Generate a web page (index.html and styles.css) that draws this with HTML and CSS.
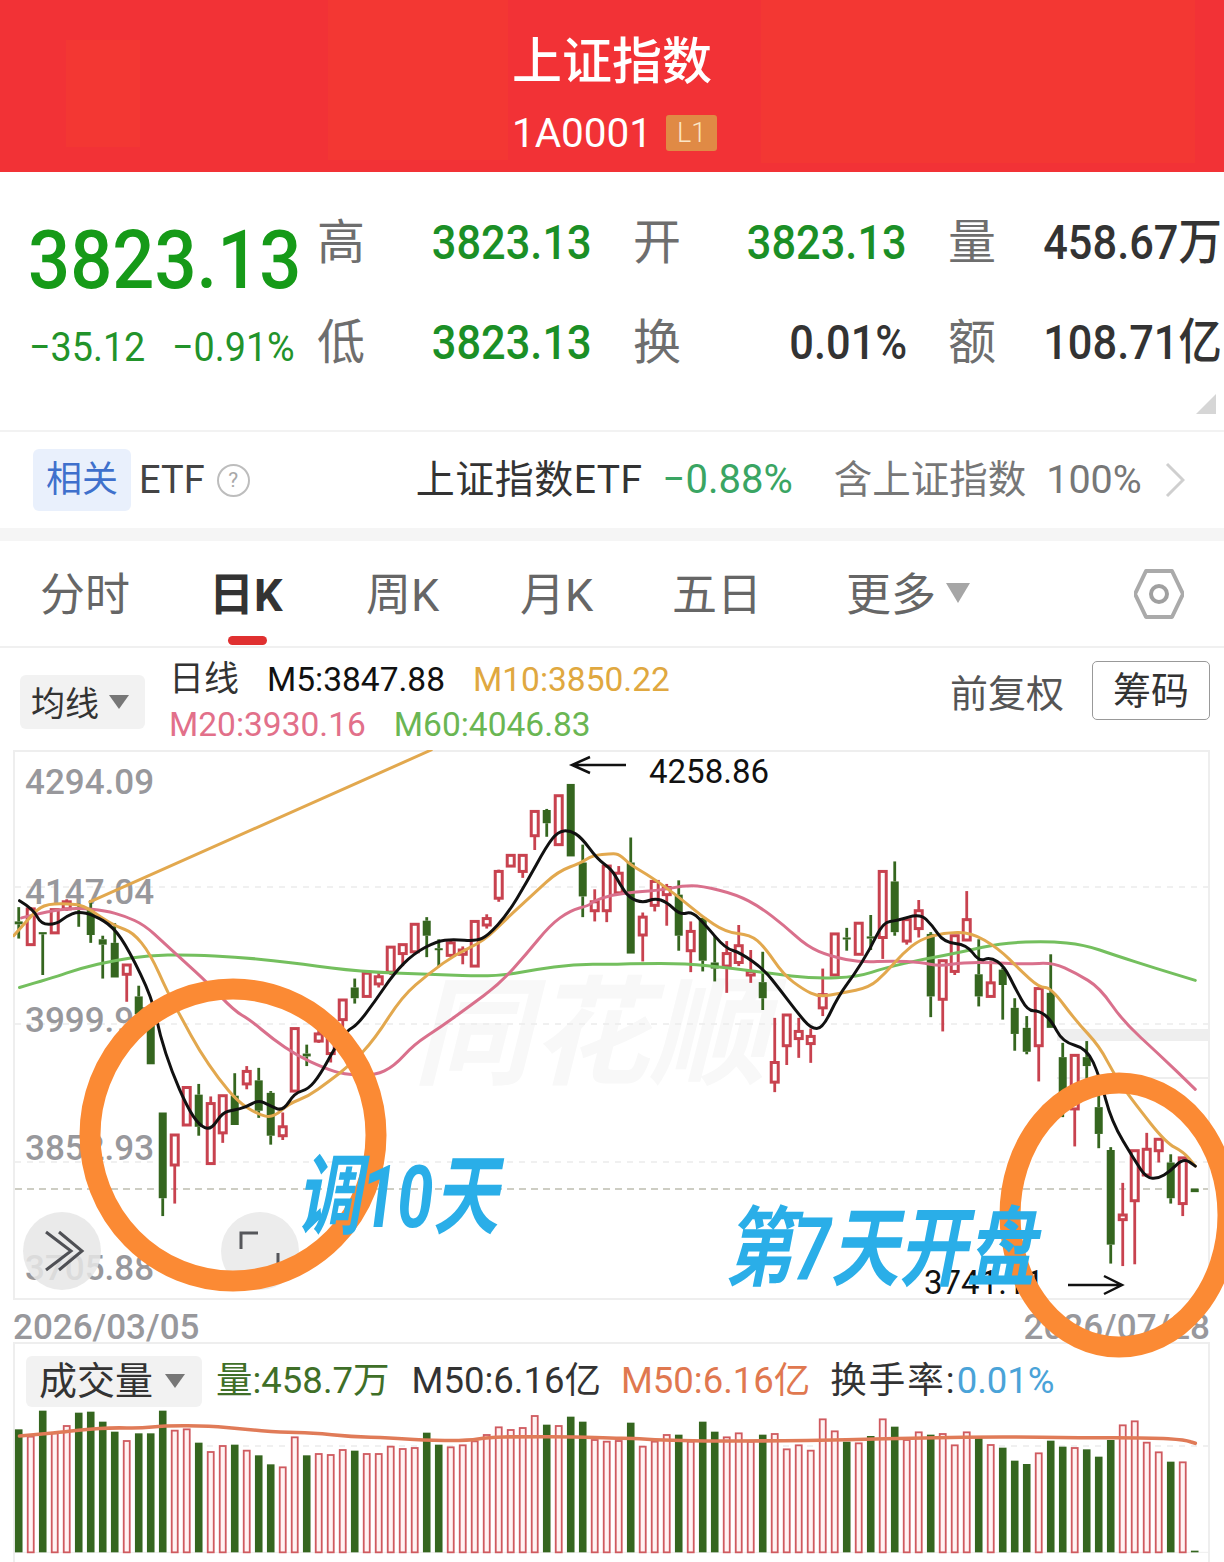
FILE: index.html
```html
<!DOCTYPE html>
<html lang="zh-CN">
<head>
    <meta charset="UTF-8">
    <meta name="viewport" content="width=device-width, initial-scale=1.0">
    <title>上证指数</title>
    <link rel="stylesheet" href="styles.css">
</head>
<body>
    <div class="page">
        <header class="title-bar">
            <div class="title">上证指数</div>
            <div class="code-line">
                <span class="code">1A0001</span>
                <span class="level">L1</span>
            </div>
        </header>

        <section class="quote">
            <div class="price-block">
                <div class="price">3823.13</div>
                <div class="change">
                    <span>−35.12</span>
                    <span>−0.91%</span>
                </div>
            </div>
            <div class="quote-grid">
                <div class="cell"><span class="cell-label">高</span><span class="val val-green">3823.13</span></div>
                <div class="cell"><span class="cell-label">开</span><span class="val val-green">3823.13</span></div>
                <div class="cell"><span class="cell-label">量</span><span class="val val-dark">458.67万</span></div>
                <div class="cell"><span class="cell-label">低</span><span class="val val-green">3823.13</span></div>
                <div class="cell"><span class="cell-label">换</span><span class="val val-dark">0.01%</span></div>
                <div class="cell"><span class="cell-label">额</span><span class="val val-dark">108.71亿</span></div>
            </div>
            <span class="corner"></span>
        </section>

        <section class="etf-row">
            <span class="etf-tag">相关</span>
            <span class="etf-name">ETF</span>
            <span class="help">?</span>
            <span class="etf-fund">上证指数ETF</span>
            <span class="etf-change">−0.88%</span>
            <span class="etf-hold">含上证指数</span>
            <span class="etf-pct">100%</span>
            <svg class="chevron" width="20" height="36" viewBox="0 0 20 36">
                <path d="M2 2 L18 18 L2 34" fill="none" stroke="#cfcfcf" stroke-width="3"/>
            </svg>
        </section>

        <div class="gap-bar"></div>

        <nav class="tabs">
            <span class="tab">分时</span>
            <span class="tab tab-active">日K</span>
            <span class="tab">周K</span>
            <span class="tab">月K</span>
            <span class="tab">五日</span>
            <span class="tab tab-more">更多<i class="caret caret-light"></i></span>
            <svg class="hex" width="50" height="50" viewBox="0 0 50 50">
                <path d="M12 2 H38 L49 25 L38 48 H12 L1 25 Z" fill="none" stroke="#aaaaaa" stroke-width="4" stroke-linejoin="round"/>
                <circle cx="25" cy="25" r="8" fill="none" stroke="#a0a0a0" stroke-width="4"/>
            </svg>
        </nav>

        <section class="legend">
            <div class="select ma-select">均线<i class="caret"></i></div>
            <div class="legend-lines">
                <div class="legend-line">
                    <span class="legend-name">日线</span>
                    <span class="m5">M5:3847.88</span>
                    <span class="m10">M10:3850.22</span>
                </div>
                <div class="legend-line">
                    <span class="m20">M20:3930.16</span>
                    <span class="m60">M60:4046.83</span>
                </div>
            </div>
            <span class="adjust">前复权</span>
            <span class="chips">筹码</span>
        </section>

        <section class="chart">
            <svg id="kline" class="chart-svg" width="1197" height="550"></svg>
        </section>

        <div class="dates">
            <span>2026/03/05</span>
            <span>2026/07/28</span>
        </div>

        <section class="volume">
            <div class="volume-head">
                <div class="select vol-select">成交量<i class="caret"></i></div>
                <span class="vol-now">量:458.7万</span>
                <span class="vol-ma">M50:6.16亿</span>
                <span class="vol-ma2">M50:6.16亿</span>
                <span class="vol-rate"><em>换手率:</em><b>0.01%</b></span>
            </div>
            <svg id="volbars" class="vol-svg" width="1197" height="150"></svg>
        </section>

        <!-- marks drawn on top of the screenshot -->
        <svg class="marks" width="1224" height="1562" viewBox="0 0 1224 1562">
            <path d="M626 765 H572 M590 757 L572 765 L590 773" fill="none" stroke="#111" stroke-width="2.5"/>
            <text class="mark-num" x="649" y="783">4258.86</text>
            <text class="mark-num" x="924" y="1294">3741.11</text>
            <path d="M1068 1285 H1122 M1104 1276 L1122 1285 L1104 1294" fill="none" stroke="#111" stroke-width="2.5"/>
            <ellipse cx="233" cy="1135" rx="143" ry="146" fill="none" stroke="#fb8a34" stroke-width="21"/>
            <ellipse cx="1119" cy="1215" rx="109" ry="132" fill="none" stroke="#fb8a34" stroke-width="21"/>
        </svg>
        <div class="note note-left">调10天</div>
        <div class="note note-right">第7天开盘</div>
    </div>

    <script src="chart.js"></script>
</body>
</html>
```

FILE: styles.css
```css
* {
    box-sizing: border-box;
}

body {
    margin: 0;
    background: #fff;
    font-family: Roboto, "Noto Sans CJK SC", sans-serif;
}

.page {
    position: relative;
    width: 1224px;
    height: 1562px;
    overflow: hidden;
}

/* title bar */
.title-bar {
    height: 172px;
    padding-top: 31px;
    color: #fff;
    text-align: center;
    background:
        linear-gradient(#f33733, #f33733) 66px 40px / 74px 107px no-repeat,
        linear-gradient(#f33733, #f33733) 328px 0 / 180px 160px no-repeat,
        linear-gradient(#f33733, #f33733) 761px 0 / 434px 163px no-repeat,
        #f23236;
}

.title {
    font-size: 50px;
    font-weight: 500;
    line-height: 62px;
}

.code-line {
    display: flex;
    justify-content: center;
    align-items: center;
    gap: 14px;
    margin-top: 16px;
    padding-left: 5px;
}

.code {
    font-size: 40.5px;
    line-height: 48px;
}

.level {
    width: 51px;
    height: 36px;
    background: #e08a45;
    border-radius: 3px;
    color: #fbe6c6;
    font-size: 27px;
    font-weight: 300;
    line-height: 36px;
}

/* quote block */
.quote {
    position: relative;
    display: flex;
    height: 260px;
    padding: 21px 0 0 28px;
    border-bottom: 2px solid #f2f2f2;
}

.price-block {
    width: 290px;
}

.price {
    margin-top: 22px;
    color: #169a18;
    font-size: 81.5px;
    font-weight: 500;
    line-height: 90px;
    white-space: nowrap;
    transform-origin: left center;
    transform: scaleX(0.91);
}

.change {
    display: flex;
    gap: 17px;
    margin-top: 19px;
    padding-left: 1px;
    color: #22932a;
    font-size: 41px;
    line-height: 46px;
}

.change span {
    transform-origin: left center;
    transform: scaleX(0.92);
}

.quote-grid {
    display: grid;
    grid-template-columns: 274px 273px 273px;
    grid-auto-rows: 100px;
    column-gap: 42px;
}

.cell {
    display: flex;
    justify-content: space-between;
    align-items: center;
    line-height: 60px;
}

.cell-label {
    margin-left: -1px;
    color: #6e6e6e;
    font-size: 48px;
}

.val {
    font-size: 49px;
    font-weight: 500;
    white-space: nowrap;
    transform-origin: right center;
    transform: scaleX(0.885);
}

.val-green {
    color: #1b8f26;
}

.val-dark {
    color: #333;
}

.corner {
    position: absolute;
    right: 8px;
    bottom: 16px;
    border-style: solid;
    border-width: 0 0 20px 20px;
    border-color: transparent transparent #d6d6d6 transparent;
}

/* related etf */
.etf-row {
    display: flex;
    align-items: center;
    height: 96px;
    padding-left: 33px;
    font-size: 38px;
    line-height: 50px;
}

.etf-tag {
    width: 98px;
    height: 62px;
    background: #e9f0fc;
    border-radius: 6px;
    color: #3f70cc;
    font-size: 36px;
    line-height: 62px;
    text-align: center;
}

.etf-name {
    margin-left: 8px;
    color: #444;
}

.help {
    width: 33px;
    height: 33px;
    margin-left: 12px;
    border: 2px solid #bdbdbd;
    border-radius: 50%;
    color: #a8a8a8;
    font-size: 21px;
    line-height: 29px;
    text-align: center;
}

.etf-fund {
    margin-left: 166px;
    color: #333;
    font-size: 39px;
    letter-spacing: 0.5px;
}

.etf-change {
    margin-left: 20px;
    color: #3aa563;
    font-size: 40px;
}

.etf-hold {
    margin-left: 41px;
    color: #777;
    font-size: 38.5px;
}

.etf-pct {
    margin-left: 20px;
    color: #777;
    font-size: 39.5px;
}

.chevron {
    margin-left: 23px;
}

.gap-bar {
    height: 13px;
    background: #f5f5f5;
}

/* tabs */
.tabs {
    display: grid;
    grid-template-columns: 173px 153px 154px 152px 174px 288px 50px;
    align-items: center;
    height: 107px;
    padding: 4px 0 0 40px;
    border-bottom: 2px solid #f0f0f0;
    color: #666;
    font-size: 45px;
    line-height: 60px;
}

.tabs .hex {
    margin-top: -4px;
}

.tab {
    white-space: nowrap;
}

.tab-active {
    position: relative;
    margin-left: -4px;
    color: #333;
    font-weight: 700;
}

.tab-active::after {
    content: "";
    position: absolute;
    left: 19px;
    bottom: -19px;
    width: 39px;
    height: 9px;
    background: #e03030;
    border-radius: 5px;
}

.tab-more {
    display: flex;
    align-items: center;
}

.caret {
    display: inline-block;
    width: 0;
    height: 0;
    margin-left: 10px;
    border-style: solid;
    border-width: 14px 10px 0 10px;
    border-color: #777 transparent transparent transparent;
}

.caret-light {
    margin-top: -6px;
    border-width: 20px 12px 0 12px;
    border-top-color: #a6a6a6;
}

/* legend above the candles */
.legend {
    display: flex;
    height: 102px;
    padding-left: 20px;
}

.select {
    display: flex;
    align-items: center;
    background: #f2f2f2;
    border-radius: 6px;
    color: #333;
    font-size: 34px;
    line-height: 48px;
}

.ma-select {
    width: 125px;
    height: 54px;
    margin-top: 27px;
    padding: 3px 0 0 11px;
}

.ma-select .caret {
    margin-top: -3px;
}

.legend-lines {
    width: 702px;
    margin-left: 24px;
    padding-top: 9px;
}

.legend-line {
    display: flex;
    gap: 28px;
    font-size: 33.5px;
    line-height: 45px;
}

.legend-name {
    color: #333;
    font-size: 35px;
}

.m5 {
    color: #111;
}

.m10 {
    color: #e0a840;
}

.m20 {
    color: #e2708a;
}

.m60 {
    color: #6ab653;
}

.adjust {
    margin: 22px 0 0 79px;
    color: #555;
    font-size: 38px;
    line-height: 48px;
    white-space: nowrap;
}

.chips {
    width: 118px;
    height: 59px;
    margin: 13px 0 0 28px;
    border: 1px solid #999;
    border-radius: 5px;
    color: #333;
    font-size: 38px;
    line-height: 59px;
    text-align: center;
}

/* chart area */
.chart {
    position: relative;
    width: 1197px;
    height: 550px;
    margin-left: 13px;
    box-shadow: inset 0 0 0 2px #eeeeee;
}

.chart-svg {
    position: absolute;
    top: 0;
    left: 0;
}

.axis-label {
    fill: #98989c;
    font-size: 35px;
    font-weight: 500;
}

.watermark {
    fill: #f8f8f8;
    font-size: 118px;
    font-weight: 700;
    font-style: italic;
}

.dates {
    display: flex;
    justify-content: space-between;
    width: 1197px;
    height: 42px;
    margin-left: 13px;
    color: #98989c;
    font-size: 35px;
    font-weight: 500;
    line-height: 56px;
}

/* volume */
.volume {
    width: 1197px;
    height: 220px;
    margin-left: 13px;
    box-shadow: inset 0 2px 0 #eeeeee, inset 2px 0 0 #eeeeee, inset -2px 0 0 #eeeeee;
}

.volume-head {
    display: flex;
    align-items: center;
    height: 66px;
    padding: 12px 0 0 13px;
    font-size: 36.5px;
    line-height: 48px;
    white-space: nowrap;
}

.vol-select {
    width: 176px;
    height: 51px;
    padding-left: 13px;
    font-size: 38px;
}

.vol-select .caret {
    margin-left: 12px;
}

.vol-now {
    margin-left: 14px;
    color: #3f6f28;
}

.vol-ma {
    margin-left: 22px;
    color: #333;
}

.vol-ma2 {
    margin-left: 20px;
    color: #e0784f;
}

.vol-rate {
    margin-left: 20px;
    color: #333;
}

.vol-rate em {
    font-style: normal;
    letter-spacing: 2px;
}

.vol-rate b {
    color: #4aa3d8;
    font-weight: 400;
}

.vol-svg {
    display: block;
}

/* hand drawn marks */
.marks {
    position: absolute;
    top: 0;
    left: 0;
}

.mark-num {
    fill: #111;
    font-size: 33px;
}

.note {
    position: absolute;
    color: #2aaee8;
    font-size: 68px;
    font-weight: 700;
    font-style: italic;
    line-height: 84px;
    white-space: nowrap;
    transform-origin: left top;
    transform: scaleY(1.28);
}

.note-left {
    left: 296px;
    top: 1141px;
    font-size: 65px;
    transform: scaleY(1.35);
}

.note-right {
    left: 725px;
    top: 1196px;
}
```

FILE: chart.js
```js
// all chart data is in "plot units": x = 48 + 30.75 * i, y read off a 2.8x scale
const SX = 2.5625, SY = 2.8;
const OX = 13, OY = 750;
const NS = 'http://www.w3.org/2000/svg';

const px = v => v / SX - OX;
const py = v => v / SY;

function add(svg, name, attrs, text) {
    const el = document.createElementNS(NS, name);
    for (const k in attrs) el.setAttribute(k, attrs[k]);
    if (text) el.textContent = text;
    svg.appendChild(el);
    return el;
}

// color, high, body top, body bottom, low
const candles = [
    ['g',440,480,488,528],['r',440,445,545,545],['g',510,510,516,630],['r',447,447,512,512],
    ['r',418,425,445,450],['g',430,440,445,495],['g',420,445,518,540],['g',520,530,545,640],
    ['g',485,540,637,637],['r',600,602,628,705],['g',660,690,740,760],['g',760,770,880,880],
    ['g',1015,1015,1255,1305],['r',1078,1078,1162,1270],['r',945,945,1050,1050],['g',935,965,1055,1080],
    ['r',970,990,1158,1158],['r',968,968,1072,1100],['g',905,968,1050,1050],['r',885,900,935,950],
    ['g',890,925,1010,1030],['g',955,960,1080,1105],['r',1015,1055,1080,1092],['r',780,780,955,955],
    ['g',825,850,858,885],['r',780,795,815,820],['r',790,800,850,875],['r',700,700,755,780],
    ['g',640,665,695,710],['r',625,625,690,690],['r',620,635,655,665],['r',552,552,622,630],
    ['r',545,545,570,605],['r',488,488,565,565],['g',468,478,520,580],['g',530,555,560,608],
    ['r',530,540,575,578],['r',550,560,572,600],['r',480,480,605,605],['r',460,472,490,500],
    ['r',335,340,415,425],['r',295,295,325,325],['r',295,295,340,358],['r',172,172,240,280],
    ['g',165,168,205,243],['r',128,128,265,265],['g',95,95,298,298],['g',265,315,410,468],
    ['r',390,425,450,480],['r',325,325,450,482],
    ['r',325,345,400,405],['g',245,315,570,570],['r',455,468,518,592],['r',368,368,435,452],
    ['r',375,385,405,492],['g',365,405,520,562],['r',480,508,562,622],['g',470,470,590,620],
    ['g',520,595,612,648],['r',535,570,605,680],['r',490,548,595,605],['r',560,620,630,652],
    ['g',565,650,695,728],['r',750,875,930,958],['r',742,742,828,882],['r',750,788,808,862],
    ['r',780,802,822,876],['r',612,685,722,745],['r',515,515,630,630],['g',498,525,530,562],
    ['r',485,485,572,572],['g',462,522,528,560],['r',340,340,525,585],['g',312,368,510,520],
    ['r',475,475,535,545],['r',420,450,500,525],['g',510,515,690,748],['r',590,590,698,788],
    ['r',520,520,620,630],['r',395,475,532,535],['g',530,628,690,718],['r',590,652,690,692],
    ['g',610,615,658,755],['g',695,722,795,842],['g',745,778,845,852],['r',668,668,828,928],
    ['g',572,680,778,778],['g',820,860,1000,1028],['r',855,855,1005,1110],['g',815,860,885,920],
    ['g',960,1000,1075,1115],['g',1112,1120,1385,1438],['r',1212,1302,1315,1445],['r',1122,1122,1262,1440],
    ['r',1072,1118,1190,1190],['r',1090,1090,1122,1155],['g',1132,1155,1255,1270],['r',1142,1142,1270,1305],
    ['g',1228,1228,1238,1238]
];

// volume bar tops, read off a 3x scale
const volumes = [
    ['g',268],['r',290],['g',212],['r',280],['r',258],['g',218],['g',215],['g',245],['g',275],['r',303],
    ['g',280],['g',280],['g',212],['r',272],['r',268],['g',308],['r',336],['r',318],['g',314],['r',332],
    ['g',346],['g',373],['r',382],['r',292],['g',346],['r',342],['r',345],['r',330],['g',332],['r',342],
    ['r',342],['r',320],['r',327],['r',324],['g',278],['g',314],['r',322],['r',316],['r',304],['r',285],
    ['r',262],['r',270],['r',264],['r',228],['g',254],['r',258],['g',230],['g',245],['r',300],['r',305],
    ['r',303],['g',248],['r',320],['r',305],['r',285],['g',284],['r',305],['g',245],['g',275],['r',292],
    ['r',280],['r',305],['g',284],['r',282],['r',328],['r',316],['r',332],['r',238],['r',274],['g',305],
    ['r',310],['g',288],['r',238],['g',260],['r',300],['r',277],['g',284],['r',282],['r',316],['r',277],
    ['g',290],['r',315],['g',323],['g',362],['g',372],['r',340],['g',302],['g',320],['r',324],['g',328],
    ['g',350],['g',300],['r',256],['r',244],['r',308],['r',337],['g',365],['r',367],['g',632]
];

// right half points were measured from the middle of the chart, so shift them
const R = 1568;
const shift = pts => pts.map(p => [p[0] + R, p[1]]);

const m5 = [[50,422],[85,445],[105,488],[145,488],[170,465],[200,452],[240,462],[290,495],[330,560],[390,695],[410,800],[440,900],[480,1000],[510,1050],[540,1065],[570,1015],[600,1008],[630,1000],[662,980],[690,995],[725,1012],[755,960],[790,950],[820,910],[860,830],[890,785],[915,770],[960,705],[1010,625],[1060,570],[1120,535],[1160,530],[1220,535],[1250,520],[1300,460],[1350,370],[1400,270],[1430,228],[1460,225],[1490,245],[1530,305]]
    .concat(shift([[0,335],[20,375],[45,415],[80,428],[110,415],[140,425],[175,462],[205,452],[240,490],[290,555],[330,568],[390,615],[430,670],[475,735],[510,780],[540,780],[580,690],[620,630],[660,560],[695,482],[730,478],[790,458],[820,490],[850,538],[910,545],[940,592],[970,580],[1005,605],[1035,670],[1065,730],[1095,730],[1125,755],[1155,818],[1217,835],[1250,915],[1280,1040],[1340,1150],[1370,1198],[1400,1200],[1430,1180],[1465,1142],[1495,1165]]));

const m10 = [[35,520],[75,470],[110,432],[170,430],[215,435],[260,470],[300,495],[340,510],[385,570],[430,680],[470,760],[510,840],[560,920],[610,985],[660,1020],[700,1030],[740,990],[790,970],[840,930],[900,880],[960,810],[1030,690],[1100,625],[1170,570],[1240,535],[1300,470],[1370,400],[1430,340],[1490,315]]
    .concat(shift([[-50,295],[0,290],[20,292],[45,320],[100,355],[170,410],[230,465],[290,510],[355,518],[390,550],[440,630],[490,670],[530,692],[590,680],[660,665],[700,625],[745,570],[790,530],[850,512],[920,510],[990,555],[1045,615],[1095,665],[1125,665],[1190,760],[1250,830],[1290,915],[1340,990],[1420,1100],[1465,1125],[1495,1165]]));

const m20 = [[55,470],[130,450],[200,442],[270,450],[320,465],[370,490],[420,540],[470,590],[530,650],[600,730],[640,755],[700,810],[760,855],[830,890],[880,908],[960,912],[1010,885],[1060,825],[1130,775],[1200,720],[1280,655],[1350,570],[1410,490],[1460,450],[1510,435]]
    .concat(shift([[-50,425],[0,405],[60,398],[130,392],[180,380],[230,380],[320,405],[380,440],[440,490],[500,550],[560,578],[640,595],[720,590],[790,595],[840,605],[900,595],[980,595],[1060,600],[1130,595],[1190,625],[1250,665],[1310,760],[1400,850],[1495,950]]));

const m60 = [[50,665],[130,640],[210,610],[290,590],[380,575],[480,573],[620,580],[780,600],[920,620],[1100,628],[1270,635],[1370,615],[1470,600]]
    .concat(shift([[0,600],[60,598],[190,598],[300,610],[400,625],[520,640],[630,635],[700,610],[800,585],[900,565],[1000,540],[1120,535],[1210,545],[1290,575],[1390,610],[1495,645]]));

// old moving average leaving the top of the chart
const m120 = [[230,425],[1105,0]];

// quadratic through midpoints so the averages read as curves
function line(svg, pts, color, width, toX, toY) {
    const p = pts.map(q => [toX(q[0]), toY(q[1])]);
    let d = 'M' + p[0][0].toFixed(1) + ' ' + p[0][1].toFixed(1);
    for (let i = 1; i < p.length - 1; i++) {
        const mx = (p[i][0] + p[i + 1][0]) / 2;
        const my = (p[i][1] + p[i + 1][1]) / 2;
        d += ' Q' + p[i][0].toFixed(1) + ' ' + p[i][1].toFixed(1) + ' ' + mx.toFixed(1) + ' ' + my.toFixed(1);
    }
    const last = p[p.length - 1];
    d += ' L' + last[0].toFixed(1) + ' ' + last[1].toFixed(1);
    add(svg, 'path', {
        d: d,
        fill: 'none',
        stroke: color,
        'stroke-width': width,
        'stroke-linejoin': 'round',
        'stroke-linecap': 'round'
    });
}

function drawKline() {
    const svg = document.getElementById('kline');
    const w = 1197;

    add(svg, 'text', { class: 'watermark', x: 400, y: 325 }, '同花顺');
    add(svg, 'rect', { x: 1044, y: 279, width: 151, height: 12, fill: '#eeeeee' });
    add(svg, 'rect', { x: 1044, y: 327, width: 151, height: 2, fill: '#eeeeee' });

    [137, 274, 412].forEach(y => {
        add(svg, 'line', { x1: 2, x2: w - 2, y1: y, y2: y, stroke: '#ececec', 'stroke-width': 1.5, 'stroke-dasharray': '6 6' });
    });
    add(svg, 'line', { x1: 2, x2: w - 2, y1: 439, y2: 439, stroke: '#bdbdb0', 'stroke-width': 1.5, 'stroke-dasharray': '7 5' });

    [['4294.09', 44], ['4147.04', 154], ['3999.97', 282], ['3852.93', 410], ['3705.88', 530]].forEach(a => {
        add(svg, 'text', { class: 'axis-label', x: 12, y: a[1] }, a[0]);
    });

    // round buttons sit over the bottom axis label
    add(svg, 'circle', { cx: 49, cy: 501, r: 39, fill: '#e6e6e6', 'fill-opacity': 0.85 });
    add(svg, 'path', { d: 'M33 482 L58 501 L33 520 M46 482 L69 501 L46 520', fill: 'none', stroke: '#4f5055', 'stroke-width': 3 });
    add(svg, 'circle', { cx: 247, cy: 501, r: 39, fill: '#ececec' });
    add(svg, 'path', { d: 'M228 499 V483 H245 M265 503 V520 H248', fill: 'none', stroke: '#55565a', 'stroke-width': 3 });

    candles.forEach((c, i) => {
        const x = px(48 + 30.75 * i);
        const green = c[0] === 'g';
        const color = green ? '#35661f' : '#c8424f';
        const top = py(c[2]), bot = py(c[3]);
        add(svg, 'line', { x1: x, x2: x, y1: py(c[1]), y2: top, stroke: color, 'stroke-width': 2.8 });
        add(svg, 'line', { x1: x, x2: x, y1: bot, y2: py(c[4]), stroke: color, 'stroke-width': 2.8 });
        add(svg, 'rect', {
            x: x - (green ? 4 : 3.5),
            y: top,
            width: green ? 8 : 7,
            height: Math.max(bot - top, 2),
            fill: green ? color : '#fff',
            stroke: green ? 'none' : color,
            'stroke-width': 3
        });
    });

    line(svg, m60, '#74bf5e', 3, px, py);
    line(svg, m20, '#d9708c', 3, px, py);
    line(svg, m10, '#e2a84e', 3, px, py);
    line(svg, m120, '#e2a84e', 3, px, py);
    line(svg, m5, '#111111', 3, px, py);
}

function drawVolume() {
    const svg = document.getElementById('volbars');
    const vy = v => v / 3 - 68; // svg starts 68px below y=1340
    const bottom = vy(637);

    add(svg, 'line', { x1: 2, x2: 1195, y1: vy(318), y2: vy(318), stroke: '#ececec', 'stroke-width': 1.5, 'stroke-dasharray': '6 6' });
    add(svg, 'line', { x1: 2, x2: 1195, y1: bottom, y2: bottom, stroke: '#eeeeee', 'stroke-width': 1 });

    volumes.forEach((v, i) => {
        const x = px(48 + 30.75 * i);
        const top = vy(v[1]);
        if (v[0] === 'g') {
            add(svg, 'rect', { x: x - 3.8, y: top, width: 7.6, height: bottom - top, fill: '#35661f' });
        } else {
            add(svg, 'rect', { x: x - 3, y: top, width: 6, height: bottom - top, fill: '#fff3f3', stroke: '#cf5a5f', 'stroke-width': 1.8 });
        }
    });

    const ma = [[50,288],[100,283],[170,275],[220,268],[290,263],[360,265],[420,257],[540,258],[620,267],[720,277],[800,278],[900,290],[1000,293],[1080,301],[1200,302],[1250,292],[1330,290],[1480,290]]
        .concat(shift([[0,295],[50,295],[130,300],[230,303],[400,303],[600,300],[800,293],[1000,290],[1200,293],[1380,293],[1470,300],[1495,310]]));
    line(svg, ma, '#e07b58', 3.6, px, vy);
}

drawKline();
drawVolume();
```
